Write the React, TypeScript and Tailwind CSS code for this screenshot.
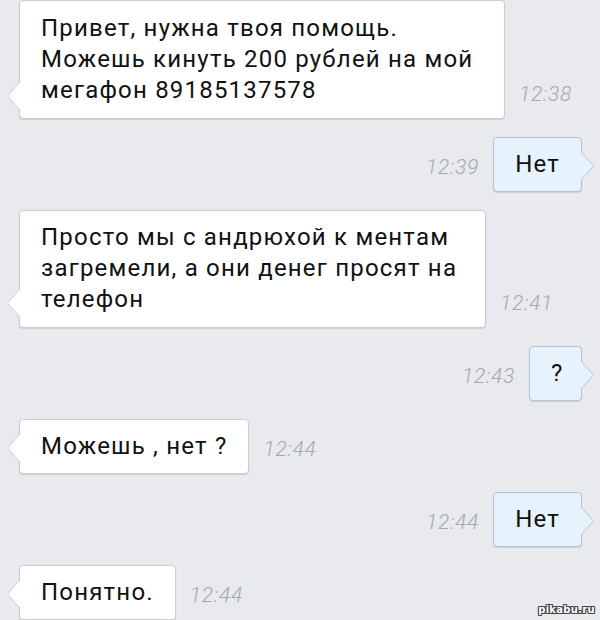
import React from "react";

type Msg = {
  side: "in" | "out";
  lines: string[];
  time: string;
  width?: string;
  pad: string;
  tail: string;
  center?: boolean;
};

const messages: Msg[] = [
  {
    side: "in",
    lines: ["Привет, нужна твоя помощь.", "Можешь кинуть 200 рублей на мой", "мегафон 89185137578"],
    time: "12:38",
    width: "w-[486px]",
    pad: "pt-3 pb-3",
    tail: "bottom-[9px]",
  },
  { side: "out", lines: ["Нет"], time: "12:39", pad: "pt-[11px] pb-[11px]", tail: "bottom-[12px]" },
  {
    side: "in",
    lines: ["Просто мы с андрюхой к ментам", "загремели, а они денег просят на", "телефон"],
    time: "12:41",
    width: "w-[467px]",
    pad: "pt-[11px] pb-3",
    tail: "bottom-[11px]",
  },
  {
    side: "out",
    lines: ["?"],
    time: "12:43",
    width: "w-[53px]",
    center: true,
    pad: "pt-[11px] pb-[11px]",
    tail: "bottom-[12px]",
  },
  { side: "in", lines: ["Можешь , нет ?"], time: "12:44", pad: "pt-[11px] pb-[11px]", tail: "bottom-[12px]" },
  { side: "out", lines: ["Нет"], time: "12:44", pad: "pt-[11px] pb-[11px]", tail: "bottom-[12px]" },
  { side: "in", lines: ["Понятно."], time: "12:44", pad: "pt-[11px] pb-[11px]", tail: "bottom-[12px]" },
];

function TailLeft({ pos }: { pos: string }) {
  return (
    <svg className={`absolute left-[-14px] ${pos}`} width="14" height="26" viewBox="0 0 14 26">
      <polygon points="14,0 13,0 1.5,13 13,26 14,26" fill="#ffffff" />
      <polyline points="13,0 1.5,13 13,26" fill="none" stroke="#c9cdd3" strokeWidth="1" />
    </svg>
  );
}

function TailRight({ pos }: { pos: string }) {
  return (
    <svg className={`absolute right-[-14px] ${pos}`} width="14" height="26" viewBox="0 0 14 26">
      <polygon points="0,0 1,0 12.5,13 1,26 0,26" fill="#e6f3fc" />
      <polyline points="1,0 12.5,13 1,26" fill="none" stroke="#b7c3ce" strokeWidth="1" />
    </svg>
  );
}

function Time({ t }: { t: string }) {
  return (
    <span className="mb-[14px] text-[21px] leading-[21px] italic font-light text-[#a4a8af] tracking-[0.7px]">
      {t}
    </span>
  );
}

function Bubble({ m }: { m: Msg }) {
  const base =
    "relative rounded-[4px] border px-[21px] text-[24px] leading-[31px] tracking-[1.2px] text-[#111111] whitespace-nowrap shadow-[0_1px_1px_rgba(0,0,0,0.12)]";
  const tone =
    m.side === "in"
      ? "bg-white border-[#c9cdd3]"
      : "bg-[#e6f3fc] border-[#b7c3ce]";
  return (
    <div className={`${base} ${tone} ${m.pad} ${m.width ?? ""} ${m.center ? "text-center px-0" : ""}`}>
      {m.lines.map((l, i) => (
        <div key={i}>{l}</div>
      ))}
      {m.side === "in" ? <TailLeft pos={m.tail} /> : <TailRight pos={m.tail} />}
    </div>
  );
}

export default function App() {
  return (
    <div
      className="relative w-[600px] h-[620px] overflow-hidden bg-[#e8eaee]"
      style={{ fontFamily: "Roboto, 'Noto Sans', 'DejaVu Sans', sans-serif" }}
    >
      <div className="flex flex-col gap-[18px]">
        {messages.map((m, i) =>
          m.side === "in" ? (
            <div key={i} className="flex items-end gap-[14px] pl-[19px]">
              <Bubble m={m} />
              <Time t={m.time} />
            </div>
          ) : (
            <div key={i} className="flex items-end justify-end gap-[14px] pr-[18px]">
              <Time t={m.time} />
              <Bubble m={m} />
            </div>
          )
        )}
      </div>
      <div
        className="absolute right-[5px] bottom-[3px] text-[10px] font-bold text-white tracking-[0.3px]"
        style={{
          fontFamily: "'DejaVu Sans', sans-serif",
          textShadow:
            "1px 0 0 #444, -1px 0 0 #444, 0 1px 0 #444, 0 -1px 0 #444, 1px 1px 0 #444, -1px -1px 0 #444, 1px -1px 0 #444, -1px 1px 0 #444",
        }}
      >
        pikabu.ru
      </div>
    </div>
  );
}
